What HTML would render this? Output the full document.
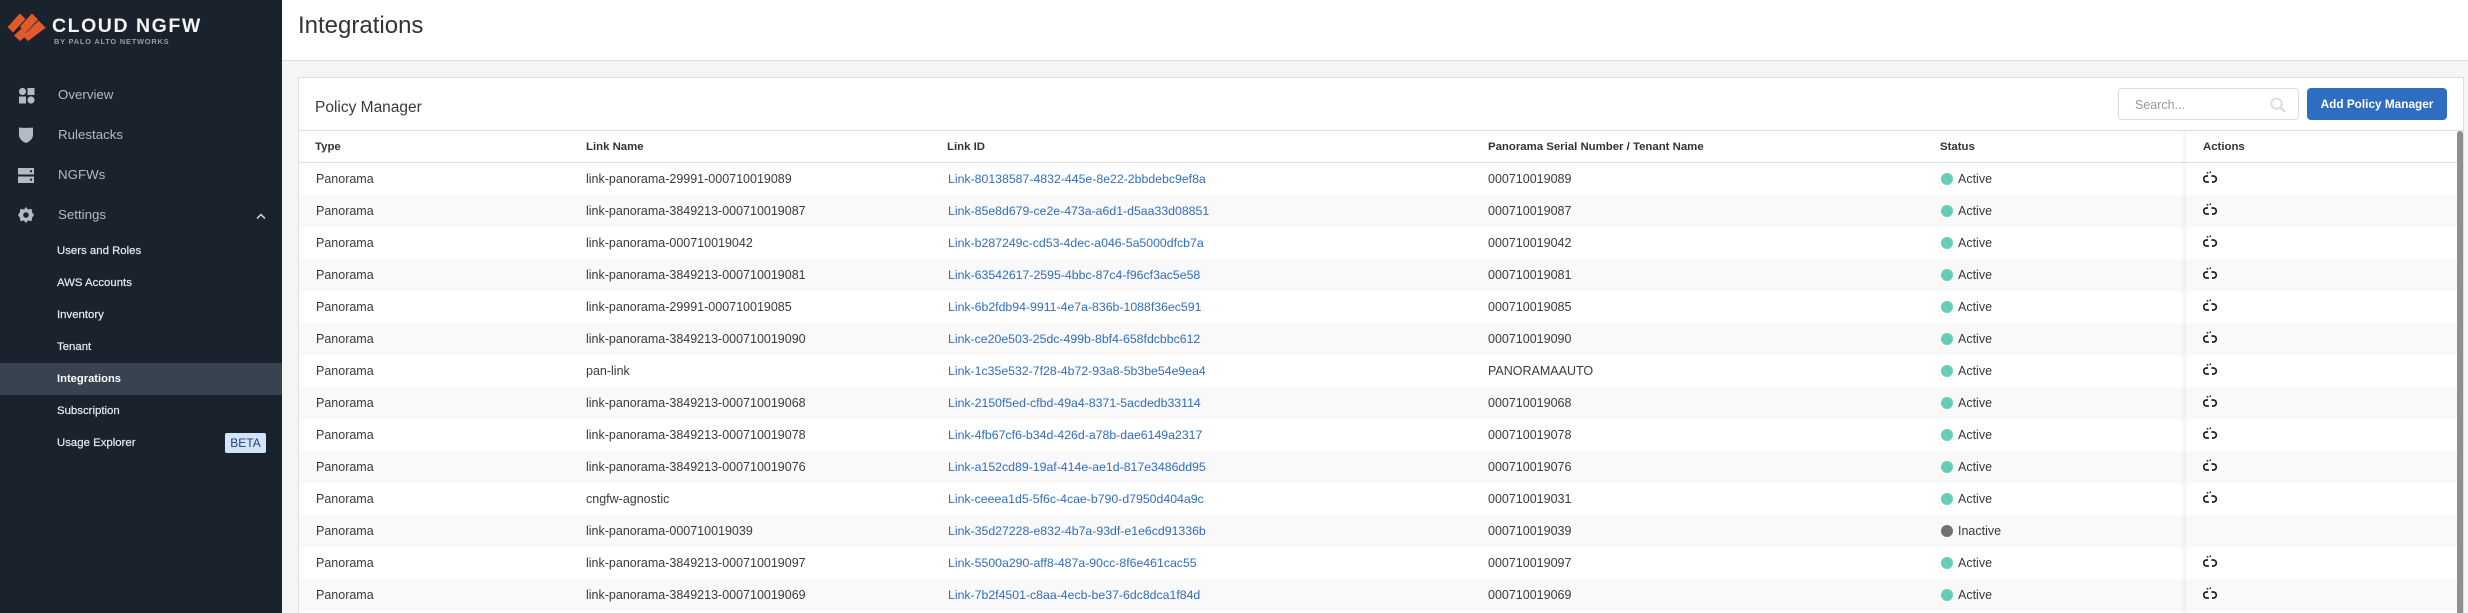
<!DOCTYPE html>
<html lang="en"><head><meta charset="utf-8"><title>Integrations</title>
<style>
*{box-sizing:border-box}
html,body{margin:0;padding:0;width:2468px;height:613px;overflow:hidden;background:#f4f5f5;font-family:"Liberation Sans",Arial,sans-serif;color:#333}
.abs,.side,.hdr,.panel,.r,.r span,.r svg,.side span,.side svg{position:absolute}
.side{left:0;top:0;width:282px;height:613px;background:#1a222e}
.logo1{left:52px;top:14px;font-size:19.5px;font-weight:700;color:#f4f4f4;letter-spacing:1.55px;line-height:24px;white-space:nowrap}
.logo2{left:54px;top:37px;font-size:7.4px;font-weight:700;color:#9a9da1;letter-spacing:.8px;line-height:10px;white-space:nowrap}
.m{left:58px;font-size:13.3px;color:#b4bac3;line-height:20px;white-space:nowrap}
.s{left:57px;font-size:11.4px;color:#e8eaee;line-height:20px;white-space:nowrap;-webkit-text-stroke:.2px #e8eaee}
.act{left:0;top:363px;width:282px;height:32px;background:#384250}
.beta{left:225px;top:433px;width:41px;height:20px;background:#d3e4fa;color:#24417f;font-size:12px;line-height:20px;text-align:center;border-radius:2px}
.hdr{left:282px;top:0;width:2186px;height:61px;background:#fff;border-bottom:1px solid #dcdedf}
.title{left:298px;top:11px;font-size:24px;line-height:30px;color:#333;white-space:nowrap}
.panel{left:298px;top:77px;width:2166px;height:536px;background:#fff;border:1px solid #dcdedf;border-bottom:0}
.ln{height:1px;background:#d9dbdc;left:299px;width:2165px}
.pm{left:315px;top:98px;font-size:15.5px;line-height:20px;color:#3a3a3a;white-space:nowrap}
.search{left:2118px;top:88px;width:181px;height:32px;border:1px solid #dadcdd;border-radius:4px;background:#fff}
.sp{left:2135px;top:95px;font-size:12.5px;line-height:20px;color:#9a9a9a}
.btn{left:2307px;top:88px;width:140px;height:32px;background:#2f6dc3;border-radius:4px;color:#fff;font-size:11.8px;font-weight:700;line-height:32px;text-align:center}
.th{top:137px;font-size:11.4px;font-weight:700;line-height:20px;color:#333;white-space:nowrap}
.r{left:299px;width:2158px;height:32px;font-size:12.5px;line-height:32px;color:#3a3a3a;white-space:nowrap}
.t{left:17px}.n{left:287px}.l{left:649px;color:#2f6dc3;font-size:12.3px}.z{left:1189px}
.d{left:1642px;top:10px;width:12px;height:12px;border-radius:50%;background:#66cbb7}
.d.off{background:#717171}
.a{left:1659px}
.i{left:1904px;top:7px}
.shade{left:2180px;top:131px;width:6px;height:482px;background:linear-gradient(90deg,rgba(0,0,0,0),rgba(0,0,0,.05))}
.sb{left:2457px;top:131px;width:6px;height:482px;background:#8e8e8e;border-radius:3px 3px 0 0}
</style></head><body>
<svg width="0" height="0" style="position:absolute"><symbol id="u" viewBox="0 0 14 15"><g fill="none" stroke="#222" stroke-width="1.700"><path d="M5 6H3.700a3 3 0 0 0 0 6h2.200M8.500 6h1.800a3 3 0 0 1 0 6H9"/><path d="M4.300 2l.5 1.500M7.300 1.500v1.500" stroke-width="1.500"/></g></symbol></svg>
<div class="hdr"></div>
<div class="abs title">Integrations</div>
<div class="panel"></div>
<div class="abs pm">Policy Manager</div>
<div class="abs search"></div>
<div class="abs sp">Search...</div>
<svg class="abs" style="left:2270px;top:97px" width="16" height="16" viewBox="0 0 17 17" fill="none" stroke="#dcdcdc" stroke-width="2"><circle cx="7" cy="7" r="5.500"/><path d="M11 11l5 5" stroke-width="2.500"/></svg>
<div class="abs btn">Add Policy Manager</div>
<div class="abs ln" style="top:130px"></div>
<div class="abs th" style="left:315px">Type</div>
<div class="abs th" style="left:586px">Link Name</div>
<div class="abs th" style="left:947px">Link ID</div>
<div class="abs th" style="left:1488px">Panorama Serial Number / Tenant Name</div>
<div class="abs th" style="left:1940px">Status</div>
<div class="abs th" style="left:2203px">Actions</div>
<div class="abs ln" style="top:162px"></div>
<main>
<div class="r" style="top:163px;background:#fff"><span class="t">Panorama</span><span class="n">link-panorama-29991-000710019089</span><span class="l">Link-80138587-4832-445e-8e22-2bbdebc9ef8a</span><span class="z">000710019089</span><span class="d"></span><span class="a">Active</span><svg class="i" width="14" height="15"><use href="#u"/></svg></div>
<div class="r" style="top:195px;background:#f9f9f9"><span class="t">Panorama</span><span class="n">link-panorama-3849213-000710019087</span><span class="l">Link-85e8d679-ce2e-473a-a6d1-d5aa33d08851</span><span class="z">000710019087</span><span class="d"></span><span class="a">Active</span><svg class="i" width="14" height="15"><use href="#u"/></svg></div>
<div class="r" style="top:227px;background:#fff"><span class="t">Panorama</span><span class="n">link-panorama-000710019042</span><span class="l">Link-b287249c-cd53-4dec-a046-5a5000dfcb7a</span><span class="z">000710019042</span><span class="d"></span><span class="a">Active</span><svg class="i" width="14" height="15"><use href="#u"/></svg></div>
<div class="r" style="top:259px;background:#f9f9f9"><span class="t">Panorama</span><span class="n">link-panorama-3849213-000710019081</span><span class="l">Link-63542617-2595-4bbc-87c4-f96cf3ac5e58</span><span class="z">000710019081</span><span class="d"></span><span class="a">Active</span><svg class="i" width="14" height="15"><use href="#u"/></svg></div>
<div class="r" style="top:291px;background:#fff"><span class="t">Panorama</span><span class="n">link-panorama-29991-000710019085</span><span class="l">Link-6b2fdb94-9911-4e7a-836b-1088f36ec591</span><span class="z">000710019085</span><span class="d"></span><span class="a">Active</span><svg class="i" width="14" height="15"><use href="#u"/></svg></div>
<div class="r" style="top:323px;background:#f9f9f9"><span class="t">Panorama</span><span class="n">link-panorama-3849213-000710019090</span><span class="l">Link-ce20e503-25dc-499b-8bf4-658fdcbbc612</span><span class="z">000710019090</span><span class="d"></span><span class="a">Active</span><svg class="i" width="14" height="15"><use href="#u"/></svg></div>
<div class="r" style="top:355px;background:#fff"><span class="t">Panorama</span><span class="n">pan-link</span><span class="l">Link-1c35e532-7f28-4b72-93a8-5b3be54e9ea4</span><span class="z">PANORAMAAUTO</span><span class="d"></span><span class="a">Active</span><svg class="i" width="14" height="15"><use href="#u"/></svg></div>
<div class="r" style="top:387px;background:#f9f9f9"><span class="t">Panorama</span><span class="n">link-panorama-3849213-000710019068</span><span class="l">Link-2150f5ed-cfbd-49a4-8371-5acdedb33114</span><span class="z">000710019068</span><span class="d"></span><span class="a">Active</span><svg class="i" width="14" height="15"><use href="#u"/></svg></div>
<div class="r" style="top:419px;background:#fff"><span class="t">Panorama</span><span class="n">link-panorama-3849213-000710019078</span><span class="l">Link-4fb67cf6-b34d-426d-a78b-dae6149a2317</span><span class="z">000710019078</span><span class="d"></span><span class="a">Active</span><svg class="i" width="14" height="15"><use href="#u"/></svg></div>
<div class="r" style="top:451px;background:#f9f9f9"><span class="t">Panorama</span><span class="n">link-panorama-3849213-000710019076</span><span class="l">Link-a152cd89-19af-414e-ae1d-817e3486dd95</span><span class="z">000710019076</span><span class="d"></span><span class="a">Active</span><svg class="i" width="14" height="15"><use href="#u"/></svg></div>
<div class="r" style="top:483px;background:#fff"><span class="t">Panorama</span><span class="n">cngfw-agnostic</span><span class="l">Link-ceeea1d5-5f6c-4cae-b790-d7950d404a9c</span><span class="z">000710019031</span><span class="d"></span><span class="a">Active</span><svg class="i" width="14" height="15"><use href="#u"/></svg></div>
<div class="r" style="top:515px;background:#f9f9f9"><span class="t">Panorama</span><span class="n">link-panorama-000710019039</span><span class="l">Link-35d27228-e832-4b7a-93df-e1e6cd91336b</span><span class="z">000710019039</span><span class="d off"></span><span class="a">Inactive</span></div>
<div class="r" style="top:547px;background:#fff"><span class="t">Panorama</span><span class="n">link-panorama-3849213-000710019097</span><span class="l">Link-5500a290-aff8-487a-90cc-8f6e461cac55</span><span class="z">000710019097</span><span class="d"></span><span class="a">Active</span><svg class="i" width="14" height="15"><use href="#u"/></svg></div>
<div class="r" style="top:579px;background:#f9f9f9"><span class="t">Panorama</span><span class="n">link-panorama-3849213-000710019069</span><span class="l">Link-7b2f4501-c8aa-4ecb-be37-6dc8dca1f84d</span><span class="z">000710019069</span><span class="d"></span><span class="a">Active</span><svg class="i" width="14" height="15"><use href="#u"/></svg></div>
</main>
<div class="abs shade"></div>
<div class="abs sb"></div>
<div class="side">
<svg style="left:0;top:0" width="52" height="50" viewBox="0 0 52 50" fill="#e05a2b"><path d="M7.500 27L20 13.500l5.500 5.500L13 32.500z"/><path d="M32 13.500l6 6-12.500 13.500 1.500 2-7 6-6-5.500 7.500-7-1.500-2z"/><path d="M38.500 20.500l7.200 7.300L28 41l-5-5z"/></svg>
<span class="logo1">CLOUD NGFW</span>
<span class="logo2">BY PALO ALTO NETWORKS</span>
<svg style="left:18px;top:87px" width="17" height="17" viewBox="0 0 17 17" fill="#b4bac3"><circle cx="4.500" cy="4.500" r="3.600"/><rect x="9.500" y="1" width="7" height="7"/><rect x="1" y="9.500" width="7" height="7"/><circle cx="13" cy="13" r="3.600"/></svg>
<span class="m" style="top:85px">Overview</span>
<svg style="left:18px;top:126px" width="16" height="18" viewBox="0 0 16 18" fill="#b4bac3"><path d="M1 1.500C4 2 12 2 15 1.500V9c0 4-4 7-7 8-3-1-7-4-7-8z"/></svg>
<span class="m" style="top:125px">Rulestacks</span>
<svg style="left:18px;top:168px" width="16" height="15" viewBox="0 0 16 15"><rect y="0" width="16" height="6.500" fill="#b4bac3"/><rect y="8.500" width="16" height="6.500" fill="#b4bac3"/><rect x="12" y="2.200" width="2" height="2" fill="#1a222e"/><rect x="12" y="10.700" width="2" height="2" fill="#1a222e"/></svg>
<span class="m" style="top:165px">NGFWs</span>
<svg style="left:18px;top:207px" width="16" height="16" viewBox="0 0 16 16"><path d="M8 0l2 2.500 3.600-.6.500 3.400L16 8l-1.900 2.700-.5 3.400-3.600-.6L8 16l-2-2.500-3.600.6-.5-3.400L0 8l1.900-2.700.5-3.400L6 2.500z" fill="#b4bac3"/><circle cx="8" cy="8" r="2.800" fill="#1a222e"/></svg>
<span class="m" style="top:205px">Settings</span>
<svg style="left:256px;top:213px" width="10" height="7" viewBox="0 0 10 7" fill="none" stroke="#c4c8ce" stroke-width="1.600"><path d="M1 5.500l4-4 4 4"/></svg>
<span class="s" style="top:241px">Users and Roles</span>
<span class="s" style="top:273px">AWS Accounts</span>
<span class="s" style="top:305px">Inventory</span>
<span class="s" style="top:337px">Tenant</span>
<span class="act"></span>
<span class="s" style="top:369px;font-weight:700;font-size:11.2px;color:#fff;-webkit-text-stroke:0">Integrations</span>
<span class="s" style="top:401px">Subscription</span>
<span class="s" style="top:433px">Usage Explorer</span>
<span class="beta">BETA</span>
</div>
</body></html>
